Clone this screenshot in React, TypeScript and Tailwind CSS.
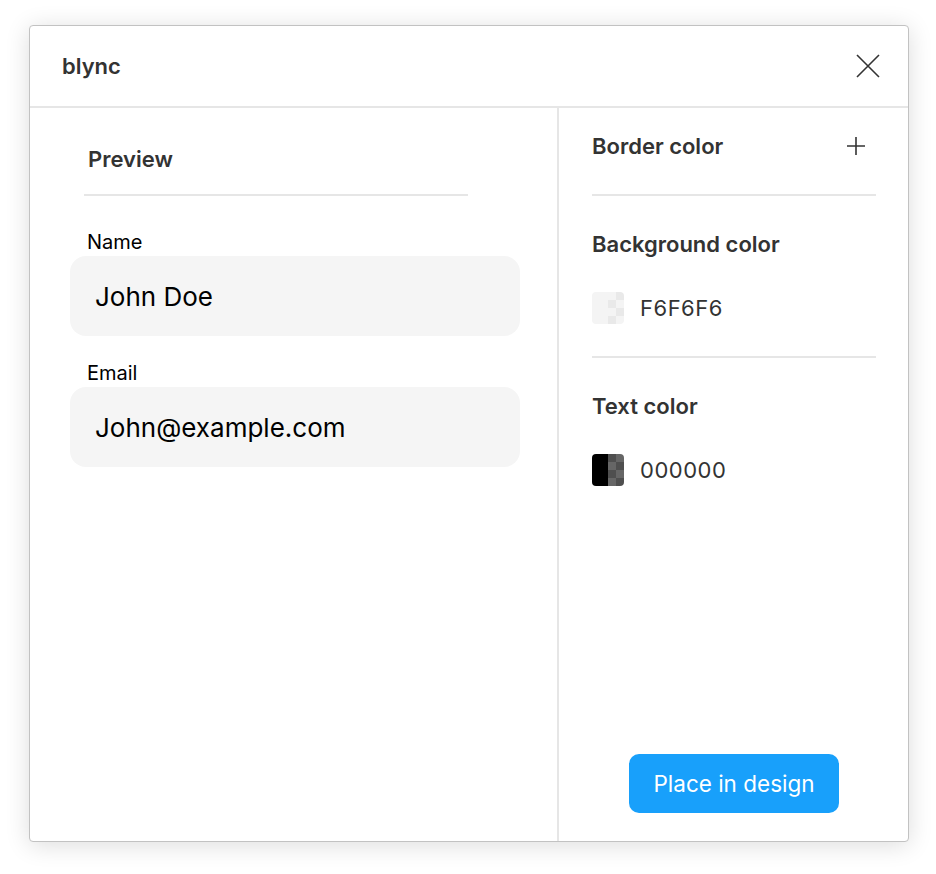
import React from "react";

function Swatch({ solid, a, b }: { solid: string; a: string; b: string }) {
  const id = `clip-${solid.replace("#", "")}`;
  return (
    <svg width="32" height="32" viewBox="0 0 32 32" className="shrink-0">
      <defs>
        <clipPath id={id}>
          <rect x="0" y="0" width="32" height="32" rx="4" ry="4" />
        </clipPath>
      </defs>
      <g clipPath={`url(#${id})`}>
        <rect x="0" y="0" width="16" height="32" fill={solid} />
        {[0, 1, 2, 3].map((r) =>
          [0, 1].map((c) => (
            <rect
              key={`${r}-${c}`}
              x={16 + c * 8}
              y={r * 8}
              width="8"
              height="8"
              fill={(r + c) % 2 === 0 ? a : b}
            />
          ))
        )}
      </g>
    </svg>
  );
}

export default function App() {
  return (
    <div
      className="w-[936px] h-[874px] bg-white pl-[29px] pt-[25px]"
      style={{ fontFamily: "Inter, 'Noto Sans', sans-serif" }}
    >
      <div className="w-[880px] h-[817px] flex flex-col bg-white border border-[#c2c2c2] rounded-[4px] shadow-[0_3px_24px_rgba(0,0,0,0.14)] overflow-hidden">
        {/* Header */}
        <div className="h-[82px] shrink-0 flex items-center justify-between pl-[32px] pr-[28px] border-b-2 border-[#e6e6e6]">
          <span className="text-[22px] font-semibold text-[#333333] leading-6">blync</span>
          <button className="w-[24px] h-[24px] flex items-center justify-center">
            <svg width="24" height="24" viewBox="0 0 24 24" fill="none">
              <path d="M1 1L23 23M23 1L1 23" stroke="#333333" strokeWidth="1.6" />
            </svg>
          </button>
        </div>

        {/* Body */}
        <div className="flex flex-1 min-h-0">
          {/* Left */}
          <div className="w-[527px] shrink-0 flex flex-col pt-[39px]">
            <div className="ml-[54px] w-[384px] border-b-2 border-[#e6e6e6] pl-[4px] pb-[21px]">
              <span className="text-[22px] font-semibold text-[#333333] leading-6">Preview</span>
            </div>
            <div className="pl-[40px] pr-[37px] pt-[34px] flex flex-col">
              <label className="pl-[17px] text-[20px] leading-6 text-black">Name</label>
              <div className="mt-[2px] h-[80px] rounded-[16px] bg-[#f5f5f5] flex items-center pl-[25px] text-[26px] text-black">
                John Doe
              </div>
              <label className="mt-[25px] pl-[17px] text-[20px] leading-6 text-black">Email</label>
              <div className="mt-[2px] h-[80px] rounded-[16px] bg-[#f5f5f5] flex items-center pl-[25px] text-[26px] text-black">
                John@example.com
              </div>
            </div>
          </div>

          {/* Right */}
          <div className="flex-1 border-l-2 border-[#e6e6e6] pl-[33px] pr-[32px] flex flex-col">
            <div className="pt-[26px] pb-[36px] border-b-2 border-[#e6e6e6] flex items-center justify-between">
              <span className="text-[22px] font-semibold text-[#333333] leading-6">Border color</span>
              <svg width="20" height="20" viewBox="0 0 20 20" fill="none" className="mr-[10px]">
                <path d="M10 1V19M1 10H19" stroke="#333333" strokeWidth="1.6" />
              </svg>
            </div>
            <div className="pt-[36px] pb-[32px] border-b-2 border-[#e6e6e6] flex flex-col">
              <span className="text-[22px] font-semibold text-[#333333] leading-6">Background color</span>
              <div className="mt-[36px] flex items-center gap-[16px]">
                <Swatch solid="#f4f4f4" a="#f4f4f4" b="#e9e9e9" />
                <span className="text-[22px] leading-6 text-[#333333] tracking-[0.5px]">F6F6F6</span>
              </div>
            </div>
            <div className="pt-[36px] flex flex-col">
              <span className="text-[22px] font-semibold text-[#333333] leading-6">Text color</span>
              <div className="mt-[36px] flex items-center gap-[16px]">
                <Swatch solid="#000000" a="#4f4f4f" b="#666666" />
                <span className="text-[22px] leading-6 text-[#333333] tracking-[0.5px]">000000</span>
              </div>
            </div>
            <div className="flex-1" />
            <div className="flex justify-center pb-[28px]">
              <button className="w-[210px] h-[59px] rounded-[10px] bg-[#18a0fb] text-white text-[22.5px]">
                Place in design
              </button>
            </div>
          </div>
        </div>
      </div>
    </div>
  );
}
